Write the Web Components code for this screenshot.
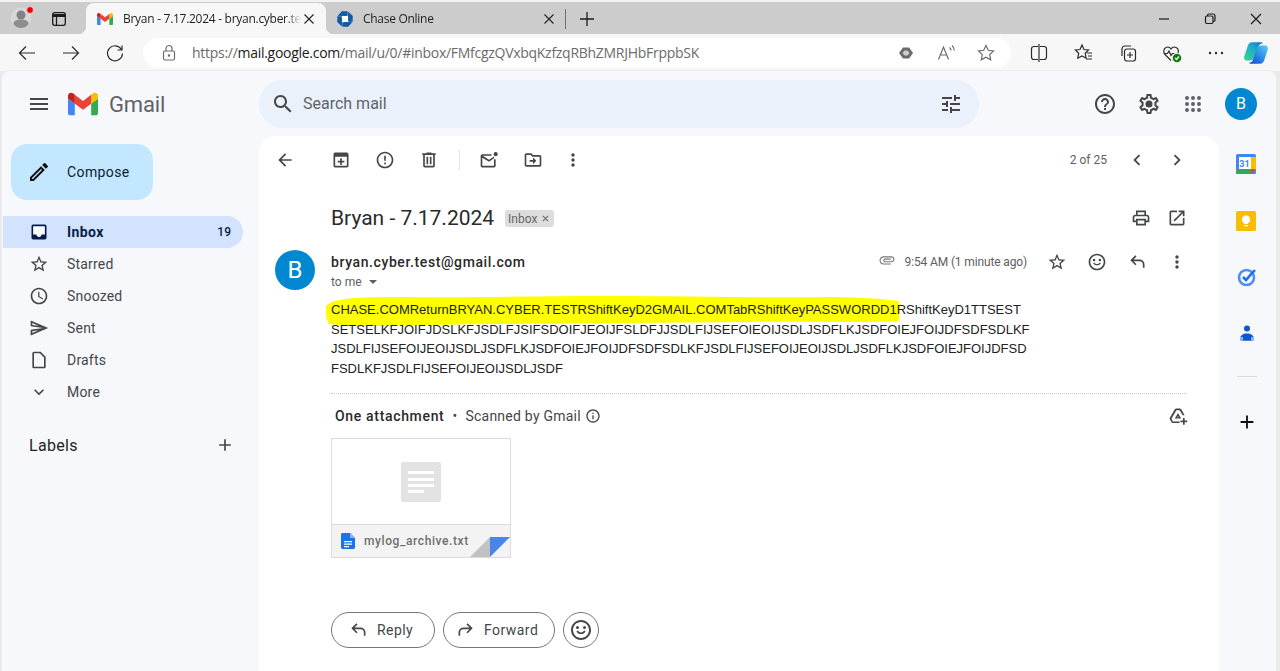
<!DOCTYPE html>
<html lang="en">
<head>
<meta charset="utf-8">
<title>Bryan - 7.17.2024 - Gmail</title>
<style>
  html, body { margin: 0; height: 671px; overflow: hidden; background: #e9e9e9; }
  body { font-family: Roboto, "Liberation Sans", sans-serif; display: flex; flex-direction: column; }
</style>
</head>
<body>
<edge-chrome></edge-chrome>
<gmail-app></gmail-app>

<script>
const ICONS = {
  menu: 'M3 18h18v-2H3v2zm0-5h18v-2H3v2zm0-7v2h18V6H3z',
  search: 'M15.5 14h-.79l-.28-.27C15.41 12.59 16 11.11 16 9.5 16 5.91 13.09 3 9.5 3S3 5.91 3 9.5 5.91 16 9.5 16c1.61 0 3.09-.59 4.23-1.57l.27.28v.79l5 4.99L20.49 19l-4.99-5zm-6 0C7.01 14 5 11.99 5 9.5S7.01 5 9.5 5 14 7.01 14 9.5 11.99 14 9.5 14z',
  tune: 'M3 17v2h6v-2H3zM3 5v2h10V5H3zm10 16v-2h8v-2h-8v-2h-2v6h2zM7 9v2H3v2h4v2h2V9H7zm14 4v-2H11v2h10zm-6-4h2V7h4V5h-4V3h-2v6z',
  help: 'M11 18h2v-2h-2v2zm1-16C6.48 2 2 6.48 2 12s4.48 10 10 10 10-4.48 10-10S17.52 2 12 2zm0 18c-4.41 0-8-3.59-8-8s3.59-8 8-8 8 3.59 8 8-3.59 8-8 8zm0-14c-2.21 0-4 1.79-4 4h2c0-1.1.9-2 2-2s2 .9 2 2c0 2-3 1.75-3 5h2c0-2.25 3-2.5 3-5 0-2.21-1.79-4-4-4z',
  settings: 'M19.43 12.98c.04-.32.07-.64.07-.98 0-.34-.03-.66-.07-.98l2.11-1.65c.19-.15.24-.42.12-.64l-2-3.46c-.09-.16-.26-.25-.44-.25-.06 0-.12.01-.17.03l-2.49 1c-.52-.4-1.08-.73-1.69-.98l-.38-2.65C14.46 2.18 14.25 2 14 2h-4c-.25 0-.46.18-.49.42l-.38 2.65c-.61.25-1.17.59-1.69.98l-2.49-1c-.06-.02-.12-.03-.18-.03-.17 0-.34.09-.43.25l-2 3.46c-.13.22-.07.49.12.64l2.11 1.65c-.04.32-.07.65-.07.98 0 .33.03.66.07.98l-2.11 1.65c-.19.15-.24.42-.12.64l2 3.46c.09.16.26.25.44.25.06 0 .12-.01.17-.03l2.49-1c.52.4 1.08.73 1.69.98l.38 2.65c.03.24.24.42.49.42h4c.25 0 .46-.18.49-.42l.38-2.65c.61-.25 1.17-.59 1.69-.98l2.49 1c.06.02.12.03.18.03.17 0 .34-.09.43-.25l2-3.46c.12-.22.07-.49-.12-.64l-2.11-1.65zm-1.98-1.71c.04.31.05.52.05.73 0 .21-.02.43-.05.73l-.14 1.13.89.7 1.08.84-.7 1.21-1.27-.51-1.04-.42-.9.68c-.43.32-.84.56-1.25.73l-1.06.43-.16 1.13-.2 1.35h-1.4l-.19-1.35-.16-1.13-1.06-.43c-.43-.18-.83-.41-1.23-.71l-.91-.7-1.06.43-1.27.51-.7-1.21 1.08-.84.89-.7-.14-1.13c-.03-.31-.05-.54-.05-.74s.02-.43.05-.73l.14-1.13-.89-.7-1.08-.84.7-1.21 1.27.51 1.04.42.9-.68c.43-.32.84-.56 1.25-.73l1.06-.43.16-1.13.2-1.35h1.39l.19 1.35.16 1.13 1.06.43c.43.18.83.41 1.23.71l.91.7 1.06-.43 1.27-.51.7 1.21-1.07.85-.89.7.14 1.13zM12 8.5a3.5 3.5 0 1 0 0 7 3.5 3.5 0 0 0 0-7z',
  apps: 'M6 8a2 2 0 1 0 0-4 2 2 0 0 0 0 4zm6 0a2 2 0 1 0 0-4 2 2 0 0 0 0 4zm6 0a2 2 0 1 0 0-4 2 2 0 0 0 0 4zM6 14a2 2 0 1 0 0-4 2 2 0 0 0 0 4zm6 0a2 2 0 1 0 0-4 2 2 0 0 0 0 4zm6 0a2 2 0 1 0 0-4 2 2 0 0 0 0 4zM6 20a2 2 0 1 0 0-4 2 2 0 0 0 0 4zm6 0a2 2 0 1 0 0-4 2 2 0 0 0 0 4zm6 0a2 2 0 1 0 0-4 2 2 0 0 0 0 4z',
  edit: 'M14.06 9.02l.92.92L5.92 19H5v-.92l9.06-9.06M17.66 3c-.25 0-.51.1-.7.29l-1.83 1.83 3.75 3.75 1.83-1.83c.39-.39.39-1.02 0-1.41l-2.34-2.34c-.2-.2-.45-.29-.71-.29zm-3.6 3.19L3 17.25V21h3.75L17.81 9.94l-3.75-3.75z',
  inbox: 'M19 3H5c-1.1 0-2 .9-2 2v14c0 1.1.9 2 2 2h14c1.1 0 2-.9 2-2V5c0-1.1-.9-2-2-2zm0 12h-4c0 1.66-1.35 3-3 3s-3-1.34-3-3H5V5h14v10z',
  star: 'M22 9.24l-7.19-.62L12 2 9.19 8.63 2 9.24l5.46 4.73L5.82 21 12 17.27 18.18 21l-1.63-7.03L22 9.24zM12 15.4l-3.76 2.27 1-4.28-3.32-2.88 4.38-.38L12 6.1l1.71 4.04 4.38.38-3.32 2.88 1 4.28L12 15.4z',
  clock: 'M11.99 2C6.47 2 2 6.48 2 12s4.47 10 9.99 10C17.52 22 22 17.52 22 12S17.52 2 11.99 2zM12 20c-4.42 0-8-3.58-8-8s3.58-8 8-8 8 3.58 8 8-3.58 8-8 8zm.5-13H11v6l5.25 3.15.75-1.23-4.5-2.67z',
  send: 'M4.01 6.03l7.51 3.22-7.52-1 .01-2.22m7.5 8.72L4 17.97v-2.22l7.51-1M2.01 3L2 10l15 2-15 2 .01 7L23 12 2.01 3z',
  draft: 'M6 2c-1.1 0-2 .9-2 2v16c0 1.1.9 2 2 2h12c1.1 0 2-.9 2-2V8l-6-6H6zm0 2h7l5 5v11H6V4z',
  down: 'M16.59 8.59L12 13.17 7.41 8.59 6 10l6 6 6-6z',
  add: 'M19 13h-6v6h-2v-6H5v-2h6V5h2v6h6v2z',
  back: 'M20 11H7.83l5.59-5.59L12 4l-8 8 8 8 1.41-1.41L7.83 13H20v-2z',
  archive: 'M5 3h14c1.1 0 2 .9 2 2v14c0 1.1-.9 2-2 2H5c-1.1 0-2-.9-2-2V5c0-1.1.9-2 2-2zm0 5v11h14V8H5zm6 2h2v3h3v2h-3v3h-2v-3H8v-2h3v-3z',
  report: 'M11 15h2v2h-2zm0-8h2v6h-2zm.99-5C6.47 2 2 6.48 2 12s4.47 10 9.99 10C17.52 22 22 17.52 22 12S17.52 2 11.99 2zM12 20c-4.42 0-8-3.58-8-8s3.58-8 8-8 8 3.58 8 8-3.58 8-8 8z',
  trash: 'M15 4V3H9v1H4v2h1v13c0 1.1.9 2 2 2h10c1.1 0 2-.9 2-2V6h1V4h-5zm2 15H7V6h10v13zM9 8h2v9H9zm4 0h2v9h-2z',
  unread: 'M4 5h11v2H4.6L12 11.6l6-3.9V11h2V19c0 1.1-.9 2-2 2H4c-1.1 0-2-.9-2-2V7c0-1.1.9-2 2-2zm0 4.2V19h14v-9l-6 4-8-4.8zM20 2.5a2.5 2.5 0 1 1 0 5 2.5 2.5 0 0 1 0-5z',
  move: 'M20 6h-8l-2-2H4c-1.1 0-1.99.9-1.99 2L2 18c0 1.1.9 2 2 2h16c1.1 0 2-.9 2-2V8c0-1.1-.9-2-2-2zm0 12H4V6h5.17l2 2H20v10zm-8-1l4-4-4-4v3H8v2h4v3z',
  more: 'M12 8c1.1 0 2-.9 2-2s-.9-2-2-2-2 .9-2 2 .9 2 2 2zm0 2c-1.1 0-2 .9-2 2s.9 2 2 2 2-.9 2-2-.9-2-2-2zm0 6c-1.1 0-2 .9-2 2s.9 2 2 2 2-.9 2-2-.9-2-2-2z',
  left: 'M15.41 7.41L14 6l-6 6 6 6 1.41-1.41L10.83 12z',
  right: 'M10 6L8.59 7.41 13.17 12l-4.58 4.59L10 18l6-6z',
  print: 'M19 8h-1V3H6v5H5c-1.66 0-3 1.34-3 3v6h4v4h12v-4h4v-6c0-1.66-1.34-3-3-3zM8 5h8v3H8V5zm8 12v2H8v-4h8v2zm2-2v-2H6v2H4v-4c0-.55.45-1 1-1h14c.55 0 1 .45 1 1v4h-2z',
  open: 'M19 19H5V5h7V3H5c-1.11 0-2 .9-2 2v14c0 1.1.89 2 2 2h14c1.1 0 2-.9 2-2v-7h-2v7zM14 3v2h3.59l-9.83 9.83 1.41 1.41L19 6.41V10h2V3h-7z',
  smile: 'M15.5 11a1.5 1.5 0 1 0 0-3 1.5 1.5 0 0 0 0 3zm-7 0a1.5 1.5 0 1 0 0-3 1.5 1.5 0 0 0 0 3zM12 2C6.47 2 2 6.47 2 12s4.47 10 10 10 10-4.47 10-10S17.53 2 12 2zm0 18c-4.42 0-8-3.58-8-8s3.58-8 8-8 8 3.58 8 8-3.58 8-8 8zm-4.6-6.6c.9 1.6 2.6 2.6 4.6 2.6s3.7-1 4.6-2.6l-1.5-.8c-.6 1.1-1.8 1.9-3.1 1.9s-2.5-.8-3.1-1.9l-1.5.8z',
  reply: 'M21 19h-2v-4a4 4 0 0 0-4-4H7.83l3.58 3.59L10 16l-6-6 6-6 1.41 1.41L7.83 9H15a6 6 0 0 1 6 6z',
  forward: 'M3 19h2v-4a4 4 0 0 1 4-4h7.17l-3.58 3.59L14 16l6-6-6-6-1.41 1.41L16.17 9H9a6 6 0 0 0-6 6z',
  clip: 'M2 12.5C2 9.46 4.46 7 7.5 7H18c2.21 0 4 1.79 4 4s-1.79 4-4 4H9.5C8.12 15 7 13.88 7 12.5S8.12 10 9.5 10H17v1.5H9.5c-1.3 0-1.3 2 0 2H18c1.4 0 2.5-1.1 2.5-2.5S19.4 8.5 18 8.5H7.5C5.3 8.5 3.5 10.3 3.5 12.5S5.3 16.5 7.5 16.5H17V18H7.5C4.46 18 2 15.54 2 12.5z',
  info: 'M11 7h2v2h-2zm0 4h2v6h-2zm1-9C6.48 2 2 6.48 2 12s4.48 10 10 10 10-4.48 10-10S17.52 2 12 2zm0 18c-4.41 0-8-3.59-8-8s3.59-8 8-8 8 3.59 8 8-3.59 8-8 8z',
  drive: 'M10 3h4.2c.7 0 1.3.4 1.7 1l4 7h-2.3L13.9 5h-3.8l-6 10.4 1.8 3.1H14V20.5H5.9c-.7 0-1.3-.4-1.7-1l-2-3.5c-.4-.6-.4-1.4 0-2l6-10c.4-.6 1.1-1 1.8-1zm2 5.5l3.9 6.5H8.1L12 8.5zm0 3.5l-.9 1.5h1.8L12 12zm6 2.5h2v3h3v2h-3v3h-2v-3h-3v-2h3v-3z'
};

class GIcon extends HTMLElement {
  connectedCallback() {
    const size = this.getAttribute('size') || 20;
    const color = this.getAttribute('color') || '#444746';
    const path = ICONS[this.getAttribute('name')] || '';
    this.attachShadow({ mode: 'open' }).innerHTML = `
      <style>
        :host { display: inline-flex; flex: none; width: ${size}px; height: ${size}px; }
        svg { width: 100%; height: 100%; fill: ${color}; display: block; }
      </style>
      <svg viewBox="0 0 24 24"><path d="${path}"/></svg>`;
  }
}
customElements.define('g-icon', GIcon);

// round toolbar slot, 40px wide by default
class IconBtn extends HTMLElement {
  connectedCallback() {
    const w = this.getAttribute('w') || 40;
    this.attachShadow({ mode: 'open' }).innerHTML = `
      <style>
        :host { display: flex; flex: none; align-items: center; justify-content: center; width: ${w}px; height: 40px; }
      </style>
      <slot></slot>`;
  }
}
customElements.define('icon-btn', IconBtn);

class BrowserTab extends HTMLElement {
  connectedCallback() {
    const active = this.hasAttribute('active');
    this.attachShadow({ mode: 'open' }).innerHTML = `
      <style>
        :host {
          display: flex; align-items: center; position: relative; flex: none;
          width: 240px; height: 31px; box-sizing: border-box; padding: 0 9px 0 11px;
          border-radius: 8px 8px 0 0;
          background: ${active ? '#f7f7f7' : 'transparent'};
          font: 12px "Open Sans", "Liberation Sans", sans-serif; color: #1f1f1f;
        }
        ${active ? `
        :host::before, :host::after {
          content: ""; position: absolute; bottom: 0; width: 8px; height: 8px;
        }
        :host::before { left: -8px; background: radial-gradient(circle at 0 0, transparent 8px, #f7f7f7 8.5px); }
        :host::after { right: -8px; background: radial-gradient(circle at 100% 0, transparent 8px, #f7f7f7 8.5px); }
        ` : ''}
        .ico { width: 16px; height: 16px; flex: none; margin-right: 10px; display: flex; align-items: center; }
        .title { flex: 1; white-space: nowrap; overflow: hidden; letter-spacing: -.28px;
          -webkit-mask-image: linear-gradient(90deg, #000 ${active ? '92%' : '100%'}, transparent); }
        svg.x { width: 16px; height: 16px; stroke: #222; stroke-width: 1.1; flex: none; }
      </style>
      <span class="ico"><slot name="icon"></slot></span>
      <span class="title"><slot></slot></span>
      <svg class="x" viewBox="0 0 16 16"><path d="M3.5 3.5l9 9M12.5 3.5l-9 9"/></svg>`;
  }
}
customElements.define('browser-tab', BrowserTab);

class EdgeChrome extends HTMLElement {
  connectedCallback() {
    this.attachShadow({ mode: 'open' }).innerHTML = `
      <style>
        :host { display: block; flex: none; height: 71px; background: #f7f7f7; border-top: 2px solid #f2f2f2; box-sizing: border-box; }
        .strip { display: flex; align-items: flex-end; height: 32px; background: #cccccc; box-sizing: border-box; }
        .profile { position: relative; width: 22px; height: 22px; margin: 0 0 5px 10px; flex: none; }
        .dot { position: absolute; left: 16px; top: -1px; width: 8px; height: 8px; border-radius: 50%; background: #f00000; border: 1px solid #ddd; box-sizing: border-box; }
        .winbtn { display: flex; align-items: center; justify-content: center; flex: none; height: 31px; }
        svg { display: block; fill: none; stroke: #1c1c1c; stroke-width: 1.2; }
        .tabs { display: flex; margin-left: 19px; }
        .sep { width: 1px; height: 20px; background: #707070; margin: 0 0 5px -1px; flex: none; }
        .spacer { flex: 1; }
        .bar { display: flex; align-items: center; height: 37px; }
        .nav { display: flex; width: 44px; justify-content: center; flex: none; }
        .nav svg { width: 20px; height: 20px; stroke: #2b2b2b; stroke-width: 1.2; }
        .addr {
          display: flex; align-items: center; flex: none; width: 868px; height: 30px; margin: 0 6px 0 6px;
          border-radius: 15px; background: #fff; box-sizing: border-box; padding: 0 16px 0 17px;
          font: 14px "Open Sans", "Liberation Sans", sans-serif; color: #6b6b6b; white-space: nowrap;
        }
        .addr .lock { margin-right: 14px; }
        .addr b { font-weight: 400; color: #1a1a1a; }
        .url { flex: 1; letter-spacing: -.28px; }
        .addr svg { width: 18px; height: 18px; stroke: #6b6b6b; }
        .addr .inner { margin-left: 22px; flex: none; }
        .tool { display: flex; justify-content: center; width: 44.25px; flex: none; }
        .tool svg { width: 20px; height: 20px; stroke: #2b2b2b; }
      </style>
      <div class="strip">
        <div class="profile">
          <svg width="22" height="22" viewBox="0 0 22 22" style="stroke:none">
            <circle cx="11" cy="11" r="10.5" fill="#dcdcdc" opacity=".7"/>
            <circle cx="11" cy="8" r="4.5" fill="#828282"/>
            <path d="M3.5 17c0-3.5 3.5-4.5 7.5-4.5s7.5 1 7.5 4.5c-1.5 2.5-4.5 4-7.5 4s-6-1.5-7.5-4z" fill="#8d8d8d"/>
          </svg>
          <span class="dot"></span>
        </div>
        <div class="winbtn" style="width:16px;margin-left:19px">
          <svg width="16" height="16" viewBox="0 0 16 16" style="stroke-width:1.3">
            <rect x="1.7" y="1.7" width="12.6" height="12.6" rx="2"/>
            <path d="M1.7 4.5h12.6" stroke-width="3"/><path d="M5.5 4v10"/>
          </svg>
        </div>
        <div class="tabs">
          <browser-tab active>
            <svg slot="icon" width="16" height="12" viewBox="52 42 88 66" style="stroke:none">
              <path fill="#4285f4" d="M58 108h14V74L52 59v43c0 3.32 2.69 6 6 6"/>
              <path fill="#34a853" d="M120 108h14c3.32 0 6-2.69 6-6V59l-20 15"/>
              <path fill="#fbbc04" d="M120 48v26l20-15v-8c0-7.42-8.47-11.65-14.4-7.2"/>
              <path fill="#ea4335" d="M72 74V48l24 18 24-18v26L96 92"/>
              <path fill="#c5221f" d="M52 51v8l20 15V48l-5.6-4.2c-5.94-4.45-14.4-.22-14.4 7.2"/>
            </svg>
            Bryan - 7.17.2024 - bryan.cyber.te
          </browser-tab>
          <browser-tab>
            <svg slot="icon" width="16" height="16" viewBox="0 0 16 16" style="stroke:none;fill:#0f5ba7">
              <path d="M5 .3h5.6v4.5H1z"/><path d="M11.3 .8v8.6l4.4-4.2z"/>
              <path d="M15.7 5v5.7h-4.5V1z"/><path d="M15.2 11.3H6.6l4.2 4.4z"/>
              <path d="M11 15.7H5.3v-4.5h9.7z"/><path d="M4.7 15.2V6.6L.3 10.8z"/>
              <path d="M.3 11V5.3h4.5v9.7z"/><path d="M.8 4.7h8.6L5.2 .3z"/>
              <rect x="5" y="5" width="6" height="6" fill="#fff"/>
            </svg>
            Chase Online
          </browser-tab>
        </div>
        <span class="sep"></span>
        <div class="winbtn" style="width:42px">
          <svg width="16" height="16" viewBox="0 0 16 16"><path d="M8 1v14M1 8h14" stroke-width="1.3"/></svg>
        </div>
        <span class="spacer"></span>
        <div class="winbtn" style="width:46px"><svg width="12" height="12" viewBox="0 0 12 12"><path d="M1 6h10"/></svg></div>
        <div class="winbtn" style="width:46px"><svg width="12" height="12" viewBox="0 0 12 12"><rect x="1.5" y="3" width="7.5" height="7.5" rx="1.5"/><path d="M3.5 3V2.5c0-.8.7-1.5 1.5-1.5h4c1.1 0 2 .9 2 2v4c0 .8-.7 1.5-1.5 1.5H9"/></svg></div>
        <div class="winbtn" style="width:46px;margin-right:1px"><svg width="12" height="12" viewBox="0 0 12 12"><path d="M1 1l10 10M11 1L1 11"/></svg></div>
      </div>
      <div class="bar">
        <span class="nav" style="margin-left:5px"><svg viewBox="0 0 20 20"><path d="M18 10H2.5M9 3.5L2.5 10 9 16.5"/></svg></span>
        <span class="nav"><svg viewBox="0 0 20 20"><path d="M2 10h15.5M11 3.5l6.5 6.5-6.5 6.5"/></svg></span>
        <span class="nav"><svg viewBox="0 0 20 20"><path d="M16.5 6.5A7.5 7.5 0 1 0 17.5 10.5M17 2.5v4.5h-4.5"/></svg></span>
        <div class="addr">
          <svg class="lock" viewBox="0 0 18 18"><rect x="3.5" y="7" width="11" height="9" rx="1.5"/><path d="M6 7V4.5a3 3 0 0 1 6 0V7"/><circle cx="9" cy="11.5" r=".6" fill="#6b6b6b"/></svg>
          <span class="url">https://<b>mail.google.com</b>/mail/u/0/#inbox/FMfcgzQVxbqKzfzqRBhZMRJHbFrppbSK</span>
          <svg class="inner" viewBox="0 0 18 18" style="fill:#6a6a6a;stroke:none"><path d="M6 3.5h6L16 9l-4 5.5H6L2 9z"/><path d="M7.5 6.5h3L12.5 9l-2 2.5h-3L5.5 9z" fill="#cfcfcf"/></svg>
          <svg class="inner" viewBox="0 0 18 18"><path d="M1.5 15.5L6.5 3l5 12.5M3.3 11h6.4M12.5 3.5c1 .8 1.5 1.8 1.5 3M15 1.5c1.5 1.3 2.3 3 2.3 5"/></svg>
          <svg class="inner" viewBox="0 0 18 18"><path d="M9 1.5l2.3 4.8 5.2.7-3.8 3.6 1 5.2L9 13.3l-4.7 2.5 1-5.2L1.5 7l5.2-.7z"/></svg>
        </div>
        <span class="tool"><svg viewBox="0 0 20 20"><path d="M9 3.5H5c-1.5 0-2.5 1-2.5 2.5v8c0 1.5 1 2.5 2.5 2.5h4M11 3.5h4c1.5 0 2.5 1 2.5 2.5v8c0 1.5-1 2.5-2.5 2.5h-4M10 1v18"/></svg></span>
        <span class="tool"><svg viewBox="0 0 20 20"><path d="M9 2l2 4.5 4.5.5-3.3 3.2.9 5L9 13l-4.2 2.2.9-5L2.4 7 7 6.5zM14 10h5M15 13h4M13 16h6"/></svg></span>
        <span class="tool"><svg viewBox="0 0 20 20"><path d="M4 13V6c0-1.7 1.3-3 3-3h6"/><rect x="6.5" y="6" width="11" height="12" rx="2.5"/><path d="M12 9v6M9 12h6"/></svg></span>
        <span class="tool"><svg viewBox="0 0 20 20"><path d="M9 17.5L3 11.5C1 9.5 1.5 5.5 4 4.5c2-1 4 0 5 1.5 1-1.5 3-2.5 5-1.5 2 1 2.7 3.5 2 5.5M1.5 10.5h4l1.5-2.5 2 4.5 1.3-2h2"/><circle cx="15" cy="15" r="4.3" fill="#107c10" stroke="none"/><path d="M13 15l1.5 1.5 2.5-3" stroke="#fff"/></svg></span>
        <span class="tool"><svg viewBox="0 0 20 20" style="fill:#2b2b2b;stroke:none"><circle cx="4" cy="10" r="1.2"/><circle cx="10" cy="10" r="1.2"/><circle cx="16" cy="10" r="1.2"/></svg></span>
        <span class="tool" style="width:40px;margin-left:-2px">
          <svg viewBox="0 0 24 24" style="width:26px;height:26px;stroke:none">
            <defs>
              <linearGradient id="cp1" x1="0" y1="1" x2="1" y2="0"><stop offset="0" stop-color="#3dd68c"/><stop offset=".6" stop-color="#1fa8c9"/><stop offset="1" stop-color="#0f6cbd"/></linearGradient>
              <linearGradient id="cp2" x1="0" y1="1" x2="1" y2="0"><stop offset="0" stop-color="#1c3fd0"/><stop offset=".5" stop-color="#2a8ce8"/><stop offset="1" stop-color="#5ad0f0"/></linearGradient>
            </defs>
            <path fill="url(#cp1)" d="M8 2h8.5c1 0 1.5.4 2 1-2.2 0-3.5 1.2-4.2 3.4L11.5 15.5C10.7 18 9 19 6.8 19H3.5C1.500 19 .5 17 1.200 15L4.500 5C5.200 3.200 6.300 2 8 2z"/>
            <path fill="url(#cp2)" d="M16 22H7.5c-1 0-1.5-.4-2-1 2.200 0 3.500-1.200 4.200-3.400L12.500 8.500C13.300 6 15 5 17.200 5H20.500C22.500 5 23.500 7 22.800 9L19.500 19C18.800 20.800 17.700 22 16 22z"/>
          </svg>
        </span>
      </div>`;
  }
}
customElements.define('edge-chrome', EdgeChrome);

class GmailHeader extends HTMLElement {
  connectedCallback() {
    this.attachShadow({ mode: 'open' }).innerHTML = `
      <style>
        :host { display: flex; align-items: center; height: 65px; flex: none; }
        .brand { display: flex; align-items: center; width: 257px; flex: none; box-sizing: border-box; padding-left: 25px; }
        .logo { width: 30px; height: 24px; margin-left: 17px; display: block; flex: none; }
        .word { font-size: 22px; color: #5f6368; margin-left: 11px; letter-spacing: -.15px; padding-top: 1px; }
        .search {
          display: flex; align-items: center; width: 720px; height: 48px; flex: none; box-sizing: border-box;
          border-radius: 24px; background: #eaf1fb; padding: 0 16px 0 12px; color: #5f6368; font-size: 16px;
        }
        .search span { flex: 1; margin-left: 8px; }
        .right { display: flex; align-items: center; margin-left: 104px; }
        .avatar {
          width: 32px; height: 32px; border-radius: 50%; background: #0288d1; color: #fff; margin-left: 10px;
          display: flex; align-items: center; justify-content: center; font-size: 16px; flex: none;
        }
      </style>
      <div class="brand">
        <g-icon name="menu" size="24" color="#444746"></g-icon>
        <svg class="logo" viewBox="52 42 88 66">
          <path fill="#4285f4" d="M58 108h14V74L52 59v43c0 3.32 2.69 6 6 6"/>
          <path fill="#34a853" d="M120 108h14c3.32 0 6-2.69 6-6V59l-20 15"/>
          <path fill="#fbbc04" d="M120 48v26l20-15v-8c0-7.42-8.47-11.65-14.4-7.2"/>
          <path fill="#ea4335" d="M72 74V48l24 18 24-18v26L96 92"/>
          <path fill="#c5221f" d="M52 51v8l20 15V48l-5.6-4.2c-5.94-4.45-14.4-.22-14.4 7.2"/>
        </svg>
        <span class="word">Gmail</span>
      </div>
      <div class="search">
        <g-icon name="search" size="24"></g-icon>
        <span>Search mail</span>
        <g-icon name="tune" size="24"></g-icon>
      </div>
      <div class="right">
        <icon-btn w="44"><g-icon name="help" size="24"></g-icon></icon-btn>
        <icon-btn w="44"><g-icon name="settings" size="24"></g-icon></icon-btn>
        <icon-btn w="44"><g-icon name="apps" size="24" color="#5f6368"></g-icon></icon-btn>
        <span class="avatar">B</span>
      </div>`;
  }
}
customElements.define('gmail-header', GmailHeader);

class NavItem extends HTMLElement {
  connectedCallback() {
    const active = this.hasAttribute('active');
    const count = this.getAttribute('count');
    const icon = this.getAttribute('icon');
    this.attachShadow({ mode: 'open' }).innerHTML = `
      <style>
        :host {
          display: flex; align-items: center; height: 32px; width: 240px; box-sizing: border-box;
          padding: 0 12px 0 26px; margin-left: 1px; border-radius: 0 16px 16px 0; font-size: 14px;
          color: ${active ? '#041e49' : '#444746'}; background: ${active ? '#d3e3fd' : 'transparent'};
          font-weight: ${active ? 700 : 400}; letter-spacing: ${active ? '.4px' : '.2px'};
        }
        .ico { position: relative; width: 20px; height: 20px; flex: none; margin-right: 18px; }
        .ico i { position: absolute; left: 3px; top: 3px; width: 14px; height: 12px; background: #fff; }
        g-icon { position: relative; }
        .label { flex: 1; }
        .count { font-size: 12px; font-weight: 500; letter-spacing: 0; }
      </style>
      <span class="ico">${active ? '<i></i>' : ''}<g-icon name="${icon}" size="20" color="${active ? '#041e49' : '#444746'}"></g-icon></span>
      <span class="label"><slot></slot></span>
      ${count ? `<span class="count">${count}</span>` : ''}`;
  }
}
customElements.define('nav-item', NavItem);

class GmailNav extends HTMLElement {
  connectedCallback() {
    this.attachShadow({ mode: 'open' }).innerHTML = `
      <style>
        :host { display: block; width: 257px; flex: none; padding-top: 8px; box-sizing: border-box; }
        .compose {
          display: flex; align-items: center; width: 142px; height: 56px; margin-left: 9px; box-sizing: border-box;
          padding-left: 16px; border-radius: 16px; background: #c2e7ff; color: #0b2235; font-size: 14px; letter-spacing: .4px;
        }
        .compose g-icon { margin-right: 16px; }
        .list { margin-top: 16px; }
        .labels {
          display: flex; align-items: center; justify-content: space-between; margin: 26px 0 0 27px; width: 206px; height: 22px;
          font-size: 16px; color: #1f1f1f; letter-spacing: .3px;
        }
      </style>
      <div class="compose"><g-icon name="edit" size="24" color="#111"></g-icon>Compose</div>
      <div class="list">
        <nav-item icon="inbox" count="19" active>Inbox</nav-item>
        <nav-item icon="star">Starred</nav-item>
        <nav-item icon="clock">Snoozed</nav-item>
        <nav-item icon="send">Sent</nav-item>
        <nav-item icon="draft">Drafts</nav-item>
        <nav-item icon="down">More</nav-item>
      </div>
      <div class="labels"><span>Labels</span><g-icon name="add" size="20"></g-icon></div>`;
  }
}
customElements.define('gmail-nav', GmailNav);

class AttachCard extends HTMLElement {
  connectedCallback() {
    this.attachShadow({ mode: 'open' }).innerHTML = `
      <style>
        :host {
          display: block; position: relative; width: 180px; height: 120px; box-sizing: border-box; overflow: hidden;
          border: 1px solid #dadce0; background: #fff;
        }
        .thumb { display: flex; align-items: center; justify-content: center; height: 85px; }
        .foot {
          display: flex; align-items: center; height: 33px; border-top: 1px solid #dadce0; background: #f3f3f3;
          box-sizing: border-box; padding-left: 9px; font-size: 12px; font-weight: 500; color: #6f6f6f; letter-spacing: .6px;
        }
        .foot svg { margin-right: 9px; flex: none; }
        .fold { position: absolute; right: 0; bottom: 0; display: block; }
      </style>
      <div class="thumb">
        <svg width="40" height="40" viewBox="0 0 40 40">
          <rect width="40" height="40" rx="2" fill="#e3e3e3"/>
          <path d="M7 9h26v3H7zM7 16h26v3H7zM7 22h26v3H7zM7 28h16v3H7z" fill="#fff"/>
        </svg>
      </div>
      <div class="foot">
        <svg width="14" height="16" viewBox="0 0 14 16">
          <path d="M1.5 0H9l5 5v9.5c0 .8-.7 1.5-1.5 1.5h-11C.7 16 0 15.3 0 14.5v-13C0 .7.7 0 1.5 0z" fill="#1a73e8"/>
          <path d="M9 0l5 5H9z" fill="#8ab4f8"/>
          <path d="M3 8h8v1.2H3zM3 10.5h8v1.2H3zM3 13h5v1.2H3z" fill="#fff"/>
        </svg>
        mylog_archive.txt
      </div>
      <svg class="fold" width="40" height="20" viewBox="0 0 40 20">
        <path d="M20 0v20H0z" fill="#c2c2c2"/>
        <path d="M20 0h20L20 20z" fill="#4a86e8"/>
      </svg>`;
  }
}
customElements.define('attach-card', AttachCard);

class MailView extends HTMLElement {
  connectedCallback() {
    this.attachShadow({ mode: 'open' }).innerHTML = `
      <style>
        :host {
          display: flex; flex-direction: column; width: 960px; flex: none; background: #fff; border-radius: 16px 16px 0 0;
          color: #1f1f1f; box-sizing: border-box;
        }
        .tools { display: flex; align-items: center; height: 48px; padding: 0 22px 0 6px; flex: none; font-size: 12px; color: #5e5e5e; }
        .tools .sep { width: 1px; height: 20px; background: #e6e6e6; margin: 0 9px 0 10px; }
        .tools .back { margin-right: 16px; }
        .gap { flex: 1; }
        .subject { display: flex; align-items: center; height: 32px; margin-top: 18px; padding: 0 24px 0 72px; flex: none; }
        .subject h2 { font-size: 21px; font-weight: 400; margin: 0; color: #2a2a2a; }
        .chip {
          display: flex; align-items: center; height: 17px; margin: 1px 0 0 11px; padding: 0 5px 0 3px; border-radius: 3px;
          background: #dddddd; color: #666; font-size: 12px;
        }
        .chip svg { width: 7px; height: 7px; margin-left: 5px; stroke: #666; stroke-width: 1.2; }
        .sender { display: flex; height: 44px; margin-top: 16px; padding-right: 22px; flex: none; }
        .avatar {
          width: 40px; height: 40px; border-radius: 50%; background: #0288d1; color: #fff; margin: 0 16px 0 16px; flex: none;
          display: flex; align-items: center; justify-content: center; font-size: 24px;
        }
        .who { flex: 1; padding-top: 2px; }
        .who b { display: block; font-size: 14px; font-weight: 500; letter-spacing: .6px; line-height: 20px; color: #2a2a2a; }
        .who span { display: flex; align-items: center; font-size: 12px; line-height: 20px; color: #5e5e5e; }
        .who i { width: 0; height: 0; border: 4px solid transparent; border-top-color: #5e5e5e; border-bottom: 0; margin-left: 7px; }
        .meta { display: flex; align-items: center; align-self: flex-start; height: 20px; margin-top: 2px; font-size: 12px; color: #5e5e5e; }
        .meta > g-icon { margin-right: 9px; margin-top: -4px; }
        .meta > span { margin-right: 10px; letter-spacing: -.14px; }
        .body {
          position: relative; margin: 6px 32px 0 72px; flex: none;
          font: 13px/19.5px "Liberation Sans", Arial, sans-serif; color: #222; white-space: nowrap;
          padding-bottom: 15px; border-bottom: 1px dotted #c9c9c9;
        }
        .body svg { position: absolute; left: -5px; top: -4px; }
        .body div { position: relative; }
        .att { display: flex; align-items: center; height: 20px; margin: 12px 31px 0 76px; font-size: 14px; color: #444746; flex: none; letter-spacing: .24px; }
        .att b { font-weight: 500; color: #2a2a2a; letter-spacing: .67px; }
        .att em { font-style: normal; margin: 0 8px; }
        .att g-icon:last-child { margin-left: auto; }
        .att .i { margin-left: 4px; }
        attach-card { margin: 12px 0 0 72px; flex: none; }
        .actions { display: flex; gap: 8px; margin: 54px 0 0 72px; flex: none; }
        .pill {
          display: flex; align-items: center; height: 36px; box-sizing: border-box; border: 1px solid #747775; border-radius: 18px;
          font-size: 14px; color: #444746; letter-spacing: .45px;
        }
        .pill.r { width: 104px; } .pill.f { width: 112px; }
        .pill.r g-icon { margin: 0 9px 0 16px; }
        .pill.f g-icon { margin: 0 8px 0 12px; }
        .pill.s { width: 36px; justify-content: center; }
      </style>
      <div class="tools">
        <icon-btn class="back"><g-icon name="back" size="20"></g-icon></icon-btn>
        <icon-btn><g-icon name="archive" size="20"></g-icon></icon-btn>
        <span style="width:4px"></span>
        <icon-btn><g-icon name="report" size="20"></g-icon></icon-btn>
        <span style="width:4px"></span>
        <icon-btn><g-icon name="trash" size="20"></g-icon></icon-btn>
        <span class="sep"></span>
        <icon-btn><g-icon name="unread" size="20"></g-icon></icon-btn>
        <span style="width:4px"></span>
        <icon-btn><g-icon name="move" size="20"></g-icon></icon-btn>
        <icon-btn><g-icon name="more" size="20"></g-icon></icon-btn>
        <span class="gap"></span>
        <span style="margin-right:10px">2 of 25</span>
        <icon-btn><g-icon name="left" size="22"></g-icon></icon-btn>
        <icon-btn><g-icon name="right" size="22"></g-icon></icon-btn>
      </div>
      <div class="subject">
        <h2>Bryan - 7.17.2024</h2>
        <span class="chip">Inbox<svg viewBox="0 0 8 8"><path d="M1 1l6 6M7 1L1 7"/></svg></span>
        <span class="gap"></span>
        <icon-btn w="36"><g-icon name="print" size="20"></g-icon></icon-btn>
        <icon-btn w="36"><g-icon name="open" size="20"></g-icon></icon-btn>
      </div>
      <div class="sender">
        <div class="avatar">B</div>
        <div class="who">
          <b>bryan.cyber.test@gmail.com</b>
          <span>to me<i></i></span>
        </div>
        <div class="meta">
          <g-icon name="clip" size="18" color="#777"></g-icon>
          <span>9:54 AM (1 minute ago)</span>
          <icon-btn><g-icon name="star" size="20"></g-icon></icon-btn>
          <icon-btn><g-icon name="smile" size="20"></g-icon></icon-btn>
          <icon-btn><g-icon name="reply" size="20"></g-icon></icon-btn>
          <icon-btn><g-icon name="more" size="20"></g-icon></icon-btn>
        </div>
      </div>
      <div class="body">
        <!-- hand-drawn marker stroke behind the first line -->
        <svg width="580" height="32" viewBox="0 0 580 32">
          <path fill="#ffff00" d="M1 9C6 5 12 4 20 3c16-2 30-2 60-2 70 1 130-1 200-1 90 0 160 2 220 1 30 0 58 2 73 4l1 9-1 11c-30 2-90 0-150 1-90 1-170 1-240 2-60 0-100 2-146 2-14 0-26-1-34-2-3-4-3-9-4-14 0-3 0-4 1-5z"/>
        </svg>
        <div>CHASE.COMReturnBRYAN.CYBER.TESTRShiftKeyD2GMAIL.COMTabRShiftKeyPASSWORDD1RShiftKeyD1TTSEST</div>
        <div>SETSELKFJOIFJDSLKFJSDLFJSIFSDOIFJEOIJFSLDFJJSDLFIJSEFOIEOIJSDLJSDFLKJSDFOIEJFOIJDFSDFSDLKF</div>
        <div>JSDLFIJSEFOIJEOIJSDLJSDFLKJSDFOIEJFOIJDFSDFSDLKFJSDLFIJSEFOIJEOIJSDLJSDFLKJSDFOIEJFOIJDFSD</div>
        <div>FSDLKFJSDLFIJSEFOIJEOIJSDLJSDF</div>
      </div>
      <div class="att">
        <b>One attachment</b><em>•</em><span>Scanned by Gmail</span>
        <g-icon class="i" name="info" size="16"></g-icon>
        <g-icon name="drive" size="20"></g-icon>
      </div>
      <attach-card></attach-card>
      <div class="actions">
        <div class="pill r"><g-icon name="reply" size="20"></g-icon>Reply</div>
        <div class="pill f"><g-icon name="forward" size="20"></g-icon>Forward</div>
        <div class="pill s"><g-icon name="smile" size="24"></g-icon></div>
      </div>`;
  }
}
customElements.define('mail-view', MailView);

class SideRail extends HTMLElement {
  connectedCallback() {
    this.attachShadow({ mode: 'open' }).innerHTML = `
      <style>
        :host { display: flex; flex-direction: column; align-items: center; width: 56px; flex: none; padding-top: 18px; box-sizing: border-box; }
        svg { display: block; flex: none; }
        .slot { height: 56.5px; display: flex; justify-content: center; flex: none; width: 100%; }
        hr { width: 20px; border: 0; border-top: 1px solid #dadce0; margin: 0; }
      </style>
      <div class="slot" style="padding-right:2px;box-sizing:border-box">
        <svg width="20" height="20" viewBox="0 0 20 20">
          <rect width="20" height="20" rx="1.5" fill="#4285f4"/>
          <rect x="3" y="3" width="14" height="13" fill="#fff"/>
          <path d="M15 3h5v13h-5z" fill="#fbbc04"/><path d="M0 15h15v5H1.5A1.5 1.5 0 0 1 0 18.5z" fill="#34a853"/>
          <path d="M15 15h5l-5 5z" fill="#ea4335"/>
          <text x="8.5" y="13" font-family="Roboto,sans-serif" font-size="9" font-weight="700" text-anchor="middle" fill="#4285f4">31</text>
        </svg>
      </div>
      <div class="slot" style="padding-right:2px;box-sizing:border-box">
        <svg width="20" height="20" viewBox="0 0 20 20">
          <rect width="20" height="20" rx="1.5" fill="#fbbc04"/>
          <circle cx="10" cy="8.5" r="4" fill="#fff"/><rect x="8" y="11" width="4" height="2" fill="#fff"/><rect x="8" y="14" width="4" height="1.3" fill="#fff"/>
        </svg>
      </div>
      <div class="slot">
        <svg width="20" height="20" viewBox="0 0 20 20" fill="none">
          <circle cx="9.5" cy="10.5" r="7.500" stroke="#4f8ff0" stroke-width="2.6"/>
          <path d="M6 10l3 3 7-8" stroke="#1a73e8" stroke-width="2.6"/>
          <path d="M15 5.5l1-3 3 1-2 2.500z" fill="#1a73e8"/>
        </svg>
      </div>
      <div class="slot" style="height:52.5px">
        <svg width="20" height="20" viewBox="0 0 20 20">
          <circle cx="10" cy="4.5" r="3" fill="#0b57d0"/>
          <path d="M3 15c0-3.5 3-5.5 7-5.5s7 2 7 5.5c0 1-1 1.8-1.8 1.8H4.800C4 16.800 3 16 3 15z" fill="#0b57d0"/>
          <path d="M3 13h3v3.800H4.800C4 16.800 3 16 3 15zM17 13h-3v3.800h1.200c.8 0 1.800-.8 1.800-1.800z" fill="#8ab4f8"/>
        </svg>
      </div>
      <hr>
      <div style="margin-top:34px"><g-icon name="add" size="22" color="#111"></g-icon></div>`;
  }
}
customElements.define('side-rail', SideRail);

class GmailApp extends HTMLElement {
  connectedCallback() {
    this.attachShadow({ mode: 'open' }).innerHTML = `
      <style>
        :host {
          display: flex; flex-direction: column; flex: 1; min-height: 0; margin: 0 4px 0 2px;
          background: #f6f8fc; border-radius: 8px 8px 0 0; overflow: hidden;
          box-shadow: 0 0 0 1px #ececec;
        }
        .main { display: flex; flex: 1; min-height: 0; }
      </style>
      <gmail-header></gmail-header>
      <div class="main">
        <gmail-nav></gmail-nav>
        <mail-view></mail-view>
        <side-rail></side-rail>
      </div>`;
  }
}
customElements.define('gmail-app', GmailApp);
</script>
</body>
</html>
